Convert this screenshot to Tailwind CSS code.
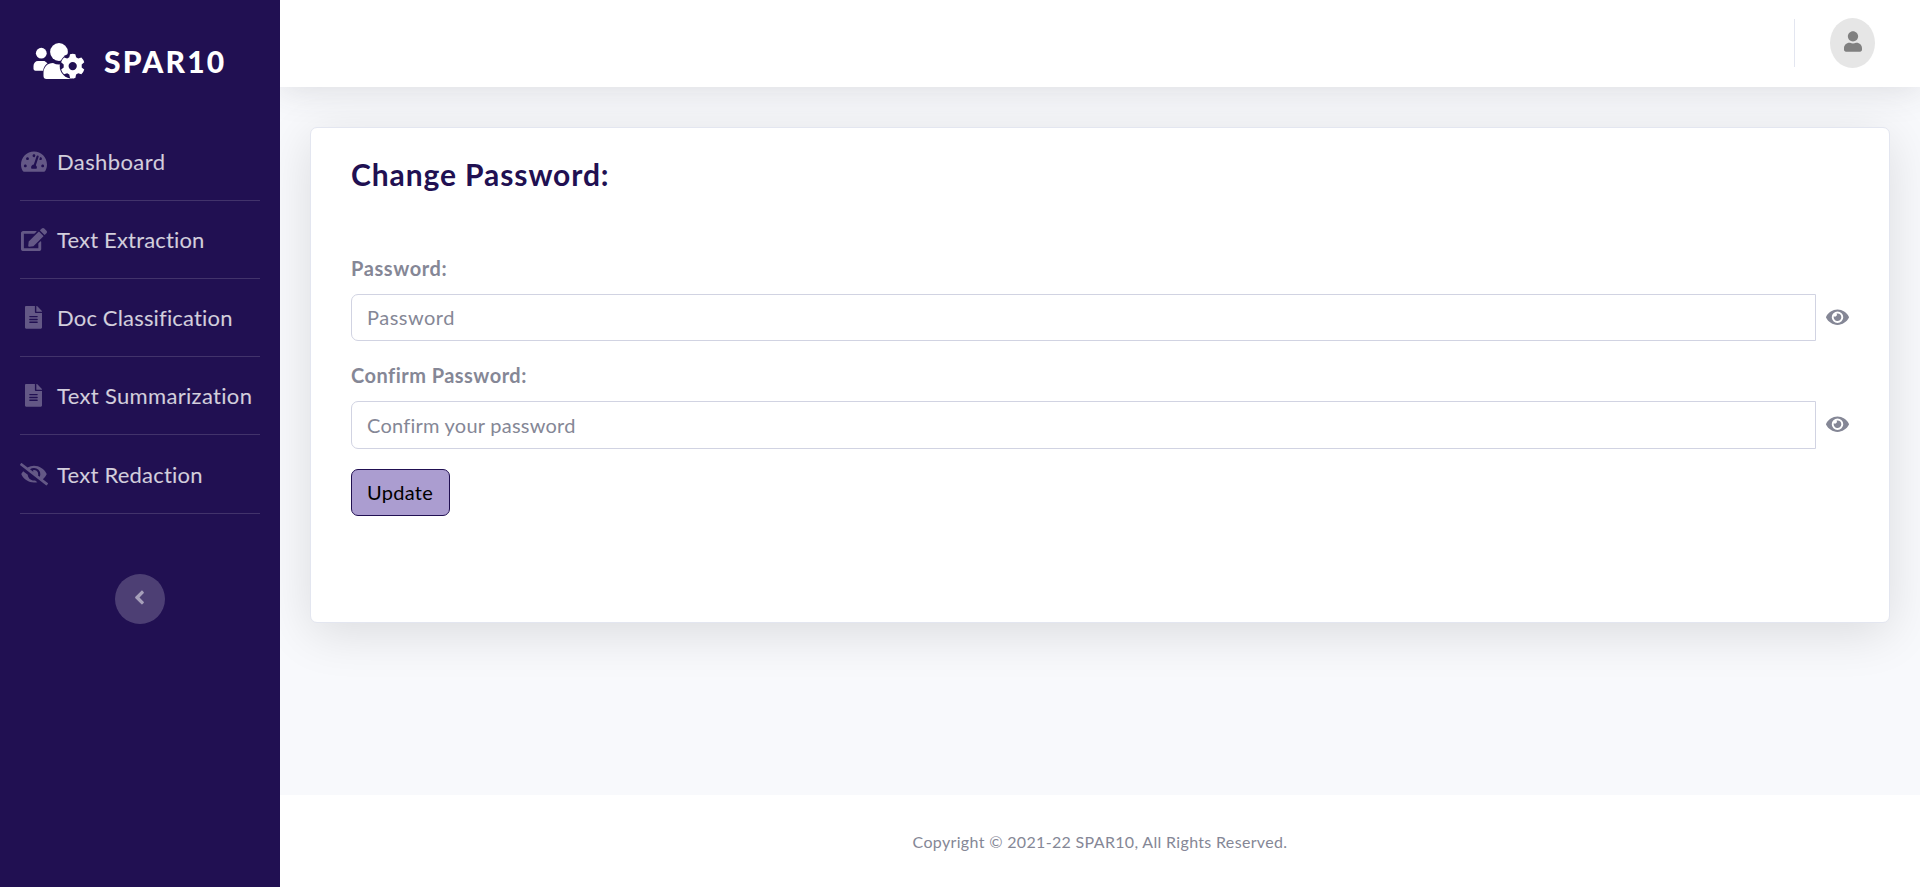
<!DOCTYPE html>
<html lang="en"><head><meta charset="utf-8"><title>SPAR10</title>
<script src="https://cdn.jsdelivr.net/npm/@tailwindcss/browser@4"></script></head>
<body class="font-[Lato,sans-serif] bg-white">
<div class="flex h-[887px] w-[1920px] overflow-hidden">
<aside class="relative z-10 flex w-[280px] shrink-0 flex-col bg-[#211052] px-5 text-[22px] leading-[30px] text-white/80">
  <a class="flex h-[122px] items-center pl-[13px] text-white">
    <svg class="h-[37px] w-[52px]" viewBox="33 43 52 37" fill="currentColor">
      <mask id="gear-gap"><rect x="30" y="40" width="60" height="45" fill="white"/><circle cx="72.5" cy="66" r="12.8" fill="black"/></mask>
      <circle cx="41.3" cy="53.2" r="5.4"/><path d="M38 61h6.500l3 2.200c-2.500 1.700-4 4.400-4.400 7.500H35.500c-1 0-2-.8-2-2V66c0-3 2-5 4.500-5z"/>
      <g mask="url(#gear-gap)"><circle cx="59" cy="52" r="8.900"/><path d="M53 63c4 2 8 2 12 0 5 0 9 4 9 9v7H46.500c-2 0-3-1-3-3v-3c0-6 4-10 9.500-10z"/></g>
      <path d="M60 76.500l1.500-.5 5.500 2.500.7.500H60z"/>
      <g fill-rule="evenodd" transform="translate(72.700 66) scale(1.060) translate(-72.500 -65.700)"><path d="M70 54.500q2.500-.7 5 0l.7 3 2 1.200 3-1q2 2 2.700 4.500L81 64.300v2.700l2.400 2.100q-.7 2.500-2.700 4.500l-3-1-2 1.200-.7 3.200q-2.500.6-5 0l-.7-3.200-2-1.200-3 1q-2-2-2.700-4.500L64 67v-2.700l-2.400-2.100q.7-2.500 2.700-4.500l3 1 2-1.200zM72.500 61.900a3.900 3.900 0 1 0 0 7.800a3.900 3.900 0 1 0 0-7.800z"/></g>
    </svg>
    <span class="ml-[19px] text-[30px] font-black tracking-[2.2px]">SPAR10</span>
  </a>
  <nav class="flex flex-col">
    <a class="flex h-[79px] items-center border-b border-white/15 pt-[2px]"><svg class="mr-[10px] ml-px w-[26px] text-white/30" fill="currentColor" viewBox="0 0 576 512"><path d="M288 32C128.940 32 0 160.940 0 320c0 52.800 14.250 102.260 39.060 144.800 5.610 9.620 16.300 15.200 27.440 15.200h443c11.140 0 21.830-5.580 27.440-15.200C561.750 422.260 576 372.800 576 320c0-159.060-128.940-288-288-288zm0 64c14.710 0 26.580 10.130 30.320 23.650-1.110 2.260-2.640 4.230-3.450 6.670l-9.220 27.670c-5.130 3.490-10.970 6.010-17.640 6.010-17.670 0-32-14.330-32-32S270.330 96 288 96zM96 384c-17.670 0-32-14.330-32-32s14.330-32 32-32 32 14.330 32 32-14.330 32-32 32zm48-160c-17.670 0-32-14.330-32-32s14.330-32 32-32 32 14.330 32 32-14.330 32-32 32zm246.770-72.410l-61.330 184C343.130 347.330 352 364.540 352 384c0 11.720-3.380 22.550-8.880 32H232.880c-5.500-9.450-8.880-20.280-8.880-32 0-33.940 26.500-61.430 59.900-63.590l61.340-184.010c4.170-12.560 17.730-19.450 30.360-15.170 12.570 4.190 19.350 17.790 15.170 30.360zm14.660 57.200l15.520-46.550c3.470-1.290 7.130-2.230 11.050-2.230 17.670 0 32 14.330 32 32s-14.330 32-32 32c-11.380-.01-20.890-6.280-26.570-15.220zM480 384c-17.670 0-32-14.330-32-32s14.330-32 32-32 32 14.330 32 32-14.330 32-32 32z"/></svg><span class="tracking-[0.4px]">Dashboard</span></a>
    <a class="flex h-[78px] items-center border-b border-white/15"><svg class="mr-[10px] ml-px w-[26px] text-white/30" fill="currentColor" viewBox="0 0 576 512"><path d="M402.600 83.200l90.200 90.200c3.800 3.800 3.800 10 0 13.800L274.400 405.600l-92.800 10.300c-12.400 1.400-22.900-9.100-21.500-21.500l10.300-92.800L388.800 83.200c3.800-3.800 10-3.800 13.800 0zm162-22.900l-48.800-48.800c-15.200-15.200-39.900-15.200-55.200 0l-35.400 35.400c-3.800 3.800-3.800 10 0 13.800l90.200 90.200c3.800 3.800 10 3.800 13.800 0l35.400-35.400c15.200-15.300 15.200-40 0-55.200zM384 346.200V448H64V128h229.800c3.200 0 6.200-1.300 8.500-3.500l40-40c7.600-7.600 2.200-20.500-8.500-20.500H48C21.500 64 0 85.500 0 112v352c0 26.500 21.500 48 48 48h352c26.500 0 48-21.500 48-48V306.200c0-10.700-12.900-16-20.500-8.500l-40 40c-2.200 2.300-3.500 5.300-3.500 8.500z"/></svg><span class="tracking-[0.17px]">Text Extraction</span></a>
    <a class="flex h-[78px] items-center border-b border-white/15"><svg class="mr-[15px] ml-[5px] w-[17px] text-white/30" fill="currentColor" viewBox="0 0 384 512"><path id="file" d="M224 136V0H24C10.700 0 0 10.700 0 24v464c0 13.300 10.700 24 24 24h336c13.300 0 24-10.700 24-24V160H248c-13.200 0-24-10.800-24-24zm64 236c0 6.600-5.400 12-12 12H108c-6.600 0-12-5.400-12-12v-8c0-6.600 5.400-12 12-12h168c6.600 0 12 5.400 12 12v8zm0-64c0 6.600-5.400 12-12 12H108c-6.600 0-12-5.400-12-12v-8c0-6.600 5.400-12 12-12h168c6.600 0 12 5.400 12 12v8zm0-72v8c0 6.600-5.400 12-12 12H108c-6.600 0-12-5.400-12-12v-8c0-6.600 5.400-12 12-12h168c6.600 0 12 5.400 12 12zm96-114.100v6.100H256V0h6.100c6.400 0 12.500 2.500 17 7l97.900 98c4.500 4.500 7 10.600 7 16.900z"/></svg><span class="tracking-[0.17px]">Doc Classification</span></a>
    <a class="flex h-[78px] items-center border-b border-white/15"><svg class="mr-[15px] ml-[5px] w-[17px] text-white/30" fill="currentColor" viewBox="0 0 384 512"><use href="#file"/></svg><span class="tracking-[0.33px]">Text Summarization</span></a>
    <a class="flex h-[79px] items-center border-b border-white/15 pt-px"><svg class="mr-[9px] w-[28px] text-white/30" fill="currentColor" viewBox="0 0 640 512"><path d="M320 400c-75.850 0-137.250-58.710-142.900-133.110L72.200 185.820c-13.790 17.300-26.480 35.590-36.720 55.590a32.350 32.350 0 0 0 0 29.190C89.710 376.410 197.070 448 320 448c26.910 0 52.870-4 77.890-10.460L346 397.390a144.130 144.130 0 0 1-26 2.610zm313.820 58.100l-110.550-85.440a331.250 331.250 0 0 0 81.250-102.070 32.350 32.350 0 0 0 0-29.190C550.290 135.590 442.930 64 320 64a308.150 308.150 0 0 0-147.320 37.700L45.460 3.370A16 16 0 0 0 23 6.180L3.370 31.450A16 16 0 0 0 6.180 53.900l588.360 454.730a16 16 0 0 0 22.460-2.810l19.640-25.270a16 16 0 0 0-2.820-22.450zm-183.720-142l-39.300-30.380A94.750 94.750 0 0 0 416 256a94.760 94.760 0 0 0-121.310-92.210A47.650 47.650 0 0 1 304 192a46.640 46.640 0 0 1-1.540 10l-73.610-56.890A142.310 142.310 0 0 1 320 112a143.920 143.920 0 0 1 144 144c0 21.630-5.290 41.790-13.900 60.110z"/></svg><span class="tracking-[0.23px]">Text Redaction</span></a>
  </nav>
  <button class="mt-[60px] flex size-[50px] items-center justify-center self-center rounded-full bg-white/20 text-white/50"><svg class="mb-[3px] mr-[2px] h-[23px] w-[11px]" fill="currentColor" viewBox="0 0 256 512"><path d="M31.700 239l136-136c9.400-9.400 24.600-9.400 33.900 0l22.600 22.600c9.400 9.400 9.400 24.600 0 33.900L127.900 256l96.400 96.400c9.400 9.400 9.400 24.600 0 33.900L201.700 409c-9.400 9.400-24.600 9.400-33.900 0l-136-136c-9.500-9.400-9.500-24.600-.1-34z"/></svg></button>
</aside>
<div class="flex grow flex-col bg-[#f8f9fc] text-[20px] leading-[30px] text-[#858796]">
  <header class="flex h-[87px] shrink-0 items-center justify-end bg-white pr-[45px] pb-px shadow-[0_3px_35px_0_rgba(58,59,69,0.15)]">
    <div class="mr-[35px] h-12 w-px bg-[#e3e6f0]"></div>
    <div class="flex h-[50px] w-[45px] items-center justify-center rounded-[50%] bg-[#e6e6e6] text-[#808080]"><svg class="mb-[3px] h-[21px] w-[18px]" fill="currentColor" viewBox="0 0 448 512"><path d="M224 256c70.700 0 128-57.300 128-128S294.700 0 224 0 96 57.300 96 128s57.300 128 128 128zm89.600 32h-16.700c-22.200 10.200-46.900 16-72.900 16s-50.600-5.800-72.900-16h-16.700C60.200 288 0 348.200 0 422.400V464c0 26.500 21.500 48 48 48h352c26.500 0 48-21.500 48-48v-41.600c0-74.200-60.200-134.400-134.400-134.400z"/></svg></div>
  </header>
  <main class="grow px-[30px] pt-10">
    <section class="h-[496px] rounded-[7px] border border-[#e3e6f0] bg-white px-10 pt-[28px] shadow-[0_10px_50px_0_rgba(0,0,0,0.12)]">
      <h1 class="text-[30px] leading-9 font-bold tracking-[0.9px] text-[#211052]"><span>Change Password:</span></h1>
      <form class="pt-[61px]">
        <label class="block font-bold tracking-[0.6px]"><span>Password:</span></label>
        <div class="mt-[11px] flex items-center"><div class="flex h-[47px] w-[1465px] items-center rounded-l-[7px] border border-[#d1d3e2] px-[15px] pb-[2px] tracking-[0.5px]"><span>Password</span></div><svg class="ml-[10px] w-[23px]" fill="currentColor" viewBox="0 0 576 512"><path id="eye" d="M572.520 241.400C518.290 135.590 410.930 64 288 64S57.680 135.640 3.480 241.410a32.350 32.350 0 0 0 0 29.190C57.710 376.410 165.070 448 288 448s230.320-71.640 284.520-177.410a32.350 32.350 0 0 0 0-29.190zM288 400a144 144 0 1 1 144-144 143.930 143.930 0 0 1-144 144zm0-240a95.310 95.310 0 0 0-25.310 3.790 47.850 47.850 0 0 1-66.900 66.900A95.780 95.780 0 1 0 288 160z"/></svg></div>
        <label class="mt-[19px] block font-bold tracking-[0.47px]"><span>Confirm Password:</span></label>
        <div class="mt-[11px] flex items-center"><div class="flex h-12 w-[1465px] items-center rounded-l-[7px] border border-[#d1d3e2] px-[15px] pb-px tracking-[0.24px]"><span>Confirm your password</span></div><svg class="mb-px ml-[10px] w-[23px]" fill="currentColor" viewBox="0 0 576 512"><use href="#eye"/></svg></div>
        <button class="mt-5 flex h-[47px] w-[99px] items-center rounded-[7px] border border-[#211052] bg-[#ab9dd0] px-[15px] pb-[2px] tracking-[0.3px] text-black"><span>Update</span></button>
      </form>
    </section>
  </main>
  <footer class="flex h-[92px] shrink-0 items-center justify-center bg-white pt-px text-[16px] leading-4 tracking-[0.33px]"><span>Copyright © 2021-22 SPAR10, All Rights Reserved.</span></footer>
</div>
</div>
</body></html>
